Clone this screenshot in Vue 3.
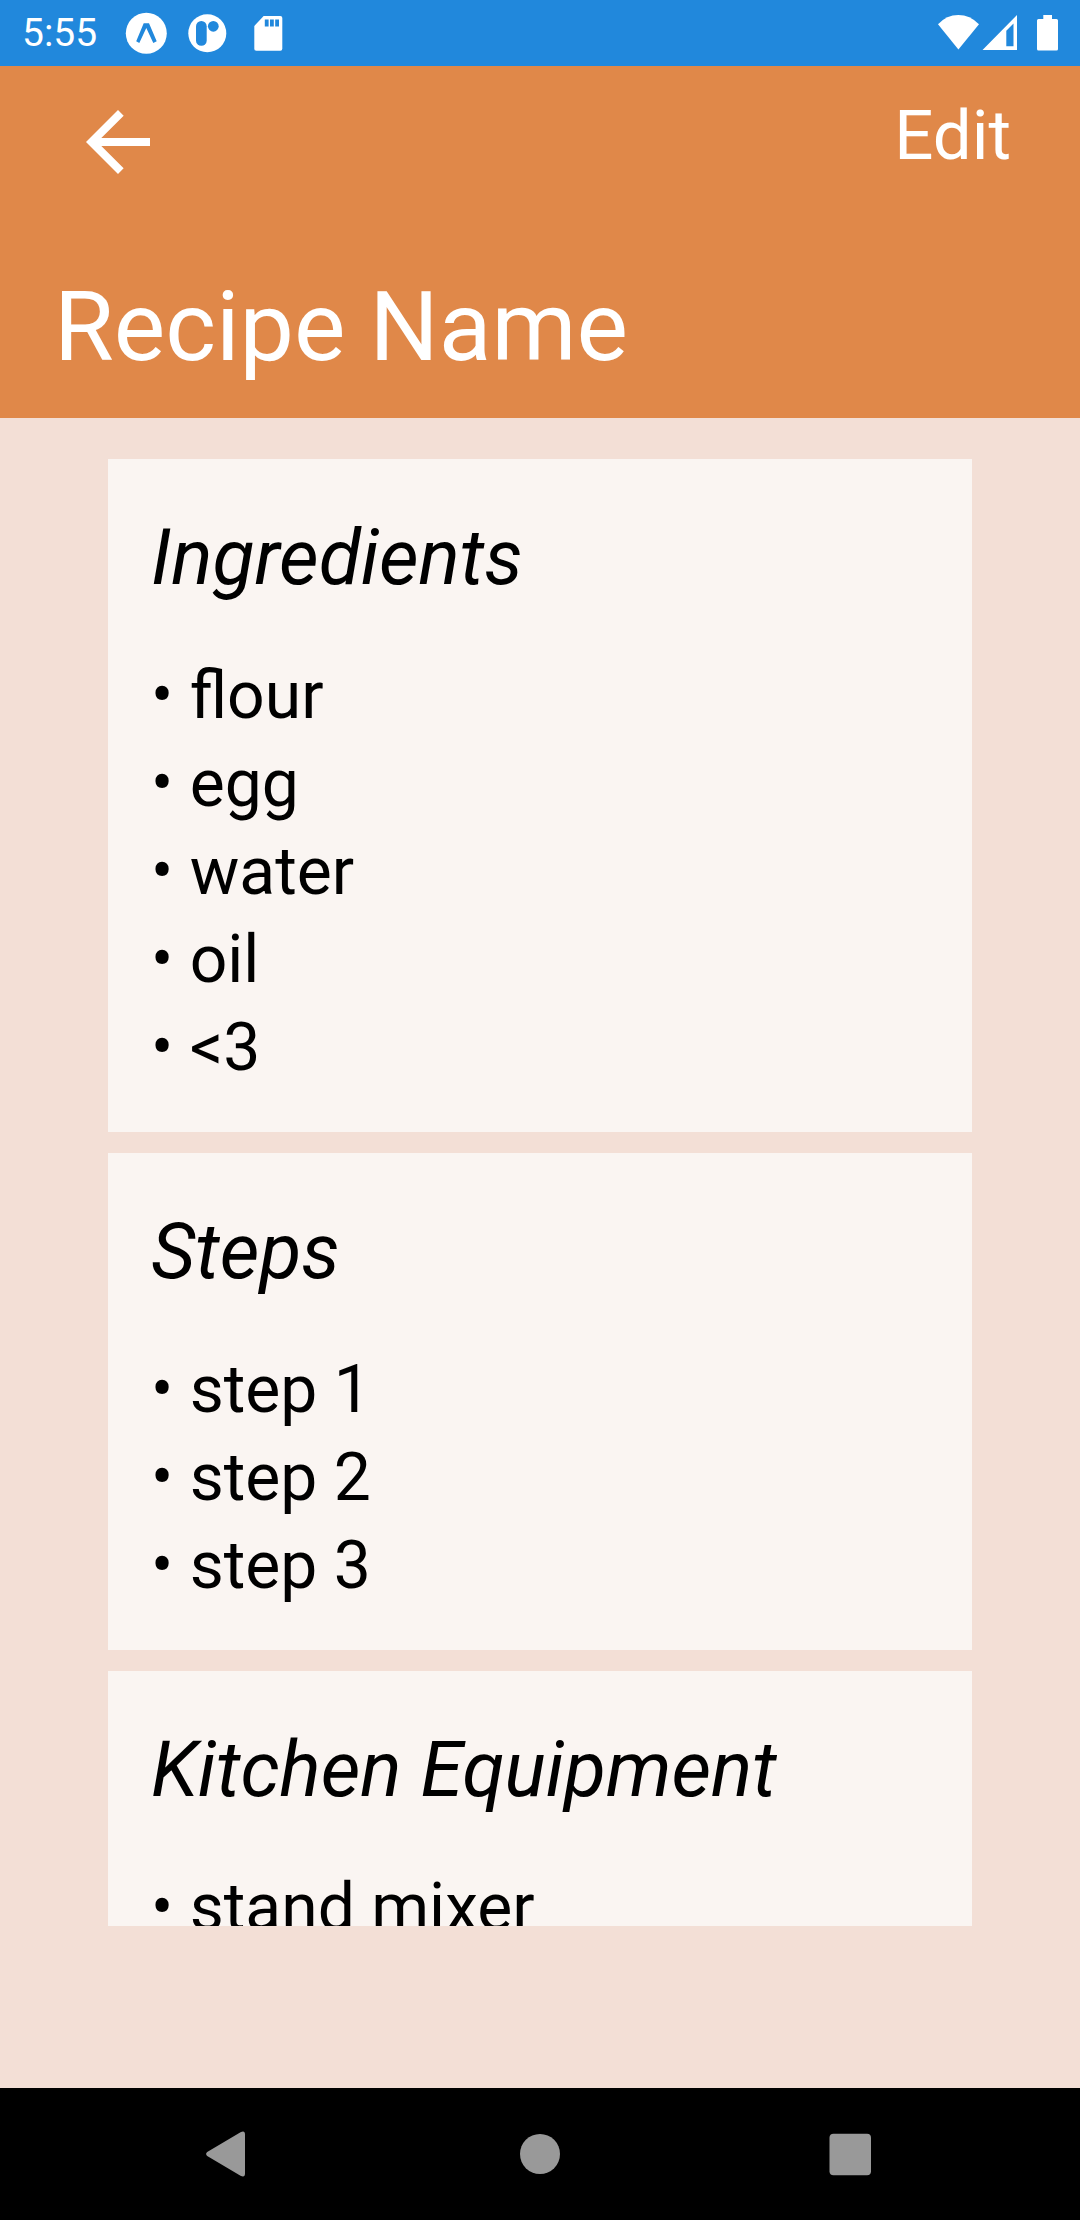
<script setup>
const sections = [
  { title: 'Ingredients', items: ['flour', 'egg', 'water', 'oil', '<3'] },
  { title: 'Steps', items: ['step 1', 'step 2', 'step 3'] },
  { title: 'Kitchen Equipment', items: ['stand mixer'] },
]
</script>

<template>
  <div class="screen">
    <div class="status-bar">
      <time class="clock">5:55</time>
      <div class="notifications">
        <svg class="status-icon" viewBox="0 0 42 42" aria-hidden="true">
          <circle class="fill" cx="21.3" cy="21.3" r="20.5" />
          <path class="hole" d="M18.7 11.3H24L31.7 29.2L28.3 31L21.3 16L14.3 31L11.2 29.2Z" />
        </svg>
        <svg class="status-icon" viewBox="0 0 42 42" aria-hidden="true">
          <circle class="fill" cx="20.3" cy="21.3" r="19" />
          <rect class="hole" x="9" y="9" width="10.7" height="24.7" rx="5.3" />
          <circle class="hole" cx="26.3" cy="14.3" r="5.4" />
        </svg>
        <svg class="status-icon" viewBox="0 0 42 42" aria-hidden="true">
          <path class="fill" d="M14.6 4H31.3a2 2 0 0 1 2 2V36.7a2 2 0 0 1-2 2H7.3a2 2 0 0 1-2-2V14Z" />
          <path class="hole" d="M15.8 7.4h3.800v7.200h-3.800zM21 7.400h3.800v7.200h-3.800zM26.200 7.400h3.800v7.200h-3.800z" />
        </svg>
      </div>
      <div class="system">
        <svg class="status-icon" viewBox="0 0 42 42" aria-hidden="true">
          <path class="fill" d="M1 12.3Q9.500 3 21.3 3T42 12.3L21.4 37.5Z" />
        </svg>
        <svg class="status-icon" viewBox="0 0 42 42" aria-hidden="true">
          <path class="fill" fill-rule="evenodd" d="M3.500 38L38 3V38ZM27.3 18.700V34.300H34.500V11.500Z" />
        </svg>
        <svg class="status-icon" viewBox="0 0 42 42" aria-hidden="true">
          <path class="fill" d="M22.300 3H31V7H35.500a1.500 1.500 0 0 1 1.500 1.500V37a1.500 1.500 0 0 1-1.500 1.500H17.500a1.500 1.500 0 0 1-1.500-1.500V8.500a1.500 1.500 0 0 1 1.500-1.500H22.300Z" />
        </svg>
      </div>
    </div>

    <header class="header">
      <div class="actions">
        <button class="back" type="button" aria-label="Back">
          <svg viewBox="0 0 24 24" aria-hidden="true">
            <path d="M20 11H7.830l5.590-5.590L12 4l-8 8 8 8 1.410-1.410L7.830 13H20z" />
          </svg>
        </button>
        <button class="edit" type="button">Edit</button>
      </div>
      <h1 class="title">Recipe Name</h1>
    </header>

    <main class="content">
      <section v-for="section in sections" :key="section.title" class="card">
        <h2 class="card-title">{{ section.title }}</h2>
        <ul class="list">
          <li v-for="item in section.items" :key="item">{{ '• ' + item }}</li>
        </ul>
      </section>
    </main>

    <nav class="nav-bar">
      <button type="button" aria-label="System back">
        <svg viewBox="0 0 48 48" aria-hidden="true">
          <path d="M1.200 22L34.500 2.200Q39 0 39 4.500V43.500Q39 48 34.500 45.800L1.200 26Q-1 24 1.200 22Z" />
        </svg>
      </button>
      <button type="button" aria-label="Home">
        <svg viewBox="0 0 48 48" aria-hidden="true"><circle cx="24" cy="24" r="20" /></svg>
      </button>
      <button type="button" aria-label="Recent apps">
        <svg viewBox="0 0 48 48" aria-hidden="true"><rect x="3.500" y="3.800" width="41.500" height="41.500" rx="4" /></svg>
      </button>
    </nav>
  </div>
</template>

<style>
body {
  margin: 0;
}
</style>

<style scoped>
.screen {
  display: flex;
  flex-direction: column;
  height: 100vh;
  background: #f3dfd6;
  color: #000;
  font-family: Roboto, "Liberation Sans", sans-serif;
}

button {
  margin: 0;
  padding: 0;
  border: 0;
  background: none;
  color: inherit;
  font: inherit;
  cursor: pointer;
}

svg {
  display: block;
}

.status-bar {
  display: flex;
  flex: none;
  align-items: center;
  height: 66px;
  padding: 0 17px 0 22px;
  background: #2188dc;
  color: #fff;
}

.clock {
  font-size: 39px;
  line-height: 46px;
}

.notifications {
  display: flex;
  gap: 20px;
  margin-left: 28px;
}

.system {
  display: flex;
  margin-left: auto;
}

.status-icon {
  width: 42px;
  height: 42px;
}

.fill {
  fill: #fff;
}

.hole {
  fill: #2188dc;
}

.header {
  flex: none;
  padding: 28px 69px 35px 54px;
  background: #e08849;
  color: #fff;
}

.actions {
  display: flex;
  justify-content: space-between;
  align-items: flex-start;
  padding-left: 16px;
}

.back svg {
  width: 96px;
  height: 96px;
  fill: #fff;
}

.edit {
  font-size: 69px;
  line-height: 84px;
}

.title {
  margin: 81px 0 0;
  font-size: 97px;
  font-weight: 400;
  line-height: 112px;
}

.content {
  display: flex;
  flex: 1;
  flex-direction: column;
  gap: 21px;
  width: 80%;
  min-height: 0;
  margin: 41px auto 162px;
  overflow-y: auto;
  scrollbar-width: none;
}

.card {
  flex: none;
  padding: 54px 43px 40px;
  background: #faf5f2;
}

.card-title {
  margin: 0 0 49px;
  font-size: 77px;
  font-style: italic;
  font-weight: 400;
  line-height: 90px;
}

.list {
  margin: 0;
  padding: 0;
  font-size: 66px;
  line-height: 88px;
  list-style: none;
}

.nav-bar {
  display: flex;
  flex: none;
  height: 132px;
  padding: 0 75px;
  background: #000;
}

.nav-bar button {
  display: flex;
  flex: 1;
  align-items: center;
  justify-content: center;
}

.nav-bar svg {
  width: 48px;
  height: 48px;
  fill: #999;
}
</style>
